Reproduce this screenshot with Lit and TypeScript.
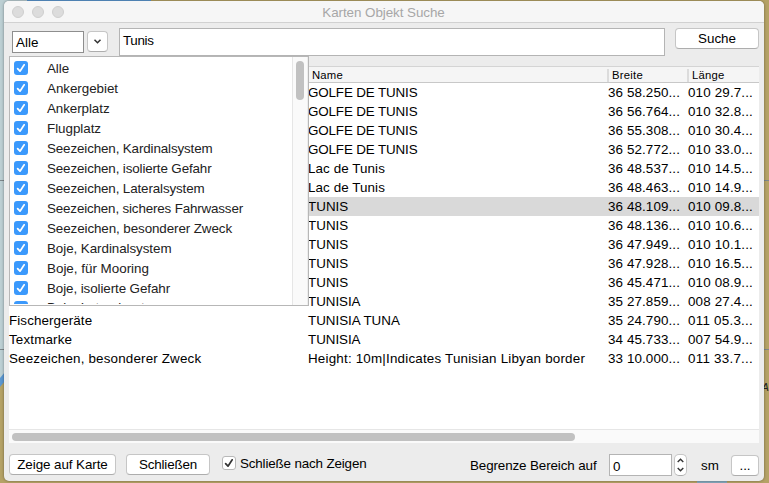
import { LitElement, html, css, svg } from "lit";
import { customElement, property } from "lit/decorators.js";

const FAMILY = '"Liberation Sans", Arial, sans-serif';
const pen = document.createElement("canvas").getContext("2d")!;

/** A single line of text whose tracking is tuned so that it fills a given width. */
@customElement("fit-text")
class FitText extends LitElement {
  @property() text = "";
  @property({ type: Number }) width = 0;
  @property({ type: Number }) size = 13;
  static styles = css`
    :host { display: inline-block; white-space: pre; }
  `;
  render() {
    pen.font = `${this.size}px ${FAMILY}`;
    const natural = pen.measureText(this.text).width;
    const track = this.width ? (this.width - natural) / this.text.length : 0;
    return html`<span style="font-size:${this.size}px;letter-spacing:${track.toFixed(3)}px">${this.text}</span>`;
  }
}

const fit = (text: string, width: number, size = 13.4) =>
  html`<fit-text .text=${text} .width=${width} .size=${size}></fit-text>`;

const FEATURES: [string, number][] = [
  ["Alle", 22],
  ["Ankergebiet", 71],
  ["Ankerplatz", 62.5],
  ["Flugplatz", 54],
  ["Seezeichen, Kardinalsystem", 165.5],
  ["Seezeichen, isolierte Gefahr", 164.5],
  ["Seezeichen, Lateralsystem", 157.5],
  ["Seezeichen, sicheres Fahrwasser", 196],
  ["Seezeichen, besonderer Zweck", 185],
  ["Boje, Kardinalsystem", 124.5],
  ["Boje, für Mooring", 102],
  ["Boje, isolierte Gefahr", 123],
  ["Boje, Lateralsystem", 116],
];

const RESULTS: [string, number, string, number, string, string][] = [
  ["", 0, "GOLFE DE TUNIS", 109.7, "36 58.250...", "010 29.7..."],
  ["", 0, "GOLFE DE TUNIS", 109.7, "36 56.764...", "010 32.8..."],
  ["", 0, "GOLFE DE TUNIS", 109.7, "36 55.308...", "010 30.4..."],
  ["", 0, "GOLFE DE TUNIS", 109.7, "36 52.772...", "010 33.0..."],
  ["", 0, "Lac de Tunis", 77.2, "36 48.537...", "010 14.5..."],
  ["", 0, "Lac de Tunis", 77.2, "36 48.463...", "010 14.9..."],
  ["", 0, "TUNIS", 40.3, "36 48.109...", "010 09.8..."],
  ["", 0, "TUNIS", 40.3, "36 48.136...", "010 10.6..."],
  ["", 0, "TUNIS", 40.3, "36 47.949...", "010 10.1..."],
  ["", 0, "TUNIS", 40.3, "36 47.928...", "010 16.5..."],
  ["", 0, "TUNIS", 40.3, "36 45.471...", "010 08.9..."],
  ["", 0, "TUNISIA", 52.5, "35 27.859...", "008 27.4..."],
  ["Fischergeräte", 83.2, "TUNISIA TUNA", 92.8, "35 24.790...", "011 05.3..."],
  ["Textmarke", 63.2, "TUNISIA", 52.5, "34 45.733...", "007 54.9..."],
  ["Seezeichen, besonderer Zweck", 192.3, "Height: 10m|Indicates Tunisian Libyan border", 277.3, "33 10.000...", "011 33.7..."],
];
const SELECTED = 6;

const tick = svg`<path d="M3.6 7.6 6 10.2 10.2 3.8" fill="none" stroke="currentColor" stroke-width="1.7" stroke-linecap="round" stroke-linejoin="round"/>`;

@customElement("app-root")
class AppRoot extends LitElement {
  static styles = css`
    :host {
      display: block; position: relative; width: 769px; height: 483px; overflow: hidden;
      font: 13px "Liberation Sans", Arial, sans-serif; color: #000; background: #b5a266;
    }
    * { box-sizing: border-box; }
    .map { position: absolute; inset: 0; display: block; }
    .window {
      position: relative; margin: 1px 5px 2px 4px; height: 480px; border-radius: 5px;
      background: #ececec; display: flex; flex-direction: column;
      box-shadow: 0 0 3px rgba(0,0,0,.4);
    }
    .title {
      height: 22px; flex: none; background: #f6f6f6; border-bottom: 1px solid #d1d1d1;
      border-radius: 5px 5px 0 0; display: grid; grid-template-columns: 1fr auto 1fr;
      align-items: center; padding: 0 9px 0 8px; color: #a7a7a7; line-height: 21px;
    }
    .title fit-text { padding-top: 1px; margin-bottom: -1px; }
    .lights { display: flex; gap: 8px; }
    .light { width: 12px; height: 12px; border-radius: 50%; background: #dcdcdc; border: 1px solid #cfcfcf; }
    .search { height: 43px; flex: none; display: flex; align-items: flex-start; padding: 5px 5px 0 8px; }
    .field { background: #fff; border: 1px solid #b4b4b4; }
    .kind { width: 72px; height: 22px; margin-top: 3px; border-color: #8e8e8e; padding-left: 3px; line-height: 21px; }
    .query { width: 546px; height: 28px; margin-left: 11px; padding-left: 3px; line-height: 23px; }
    .button {
      height: 21px; background: #fff; border: 1px solid #c6c6c6; border-bottom-color: #adadad;
      border-radius: 4px; display: flex; align-items: center; justify-content: center; line-height: 19px;
    }
    .drop { width: 21px; margin: 3px 0 0 3px; }
    .go { width: 84px; margin-left: 10px; }
    .table { margin: 0 5px 0 5px; height: 377px; flex: none; background: #fff; display: flex; flex-direction: column; }
    .row { display: grid; grid-template-columns: 299px 300px 80px 71px; height: 19px; line-height: 19px; flex: none; }
    .row.selected { background: #d9d9d9; }
    .head {
      height: 17px; line-height: 17px; background: #f5f5f5; border-top: 1px solid #d4d4d4;
      border-bottom: 1px solid #c8c8c8; font-size: 11px;
    }
    .head div { padding-left: 4px; display: flex; }
    .head .sep { border-left: 2px solid #dcdcdc; margin: 2px 0 2px -1px; line-height: 13px; padding-left: 3px; }
    .hbar { margin-top: auto; height: 14px; background: #fafafa; border-top: 1px solid #e6e6e6; padding: 3px; }
    .thumb { background: #c1c1c1; border-radius: 4px; }
    .hbar .thumb { width: 563px; height: 8px; }
    .actions { flex: 1; display: flex; align-items: flex-start; padding: 11px 5px 0 5px; line-height: 19px; }
    .show { width: 107px; }
    .close { width: 84px; margin-left: 10px; }
    .check { width: 14px; height: 14px; border-radius: 3px; display: block; }
    .after { display: flex; margin-left: 12px; width: 248px; }
    .after .check { background: #fff; border: 1px solid #b8b8b8; margin: 2px 4px 0 0; color: #333; }
    .limit { width: 139px; margin-top: 2px; }
    .range { width: 63px; height: 22px; padding-left: 3px; line-height: 23px; }
    .step { width: 13px; height: 22px; border-radius: 5px; margin-left: 2px; }
    .unit { margin: 2px 0 0 14px; width: 30px; }
    .more { width: 28px; margin-top: 1px; }
    .popup {
      position: absolute; left: 5px; top: 55px; width: 300px; height: 250px; background: #fff;
      border: 1px solid #b7b7b7; display: flex; overflow: hidden; color: #222;
    }
    .list { flex: 1; height: 247px; overflow: hidden; padding-top: 1px; }
    .item { height: 20px; line-height: 22px; display: flex; align-items: flex-start; padding-left: 4px; }
    .item:last-child { line-height: 19px; }
    .item .check { background: #3b99fc; color: #fff; margin: 3px 19px 0 0; }
    .vbar { width: 16px; background: #fafafa; border-left: 1px solid #e6e6e6; border-right: 1px solid #ededed; padding: 4px 3px; }
    .vbar .thumb { width: 8px; height: 39px; }
  `;

  render() {
    return html`
      <svg class="map" width="769" height="483">
        <rect width="769" height="483" fill="#b5a266"/>
        <path d="M0 0H27V5H5V372L0 382Z" fill="#bccfd3"/>
        <rect x="27" width="124" height="4" fill="#5b97d0"/>
        <path d="M0 378 5 372V381L0 387Z" fill="#5b97d0"/>
        <path d="M0 180.5H5M764 180.5H769M0 349.5H5M764 349.5H769" stroke="#7d868a"/>
        <rect x="697" y="480" width="30" height="3" fill="#86a9bd"/>
        <text x="753.5" y="391" font-size="11" font-style="italic" fill="#222">RA</text>
      </svg>
      <div class="window">
        <div class="title">
          <div class="lights"><i class="light"></i><i class="light"></i><i class="light"></i></div>
          ${fit("Karten Objekt Suche", 122.5)}
        </div>
        <div class="search">
          <div class="field kind">${fit("Alle", 22.5)}</div>
          <div class="button drop">
            <svg width="9" height="7"><path d="M1.5 1.7 4.5 4.7 7.5 1.7" fill="none" stroke="#333" stroke-width="1.5"/></svg>
          </div>
          <div class="field query">${fit("Tunis", 30.5)}</div>
          <div class="button go">${fit("Suche", 38)}</div>
        </div>
        <div class="table">
          <div class="row head">
            <div></div>
            <div>${fit("Name", 31, 11.3)}</div>
            <div class="sep">${fit("Breite", 31, 11.3)}</div>
            <div class="sep">${fit("Länge", 32.5, 11.3)}</div>
          </div>
          ${RESULTS.map(([kind, kw, name, nw, lat, lon], i) => html`
            <div class="row ${i === SELECTED ? "selected" : ""}">
              <div>${kind ? fit(kind, kw) : ""}</div>
              <div>${fit(name, nw)}</div>
              <div>${fit(lat, 72)}</div>
              <div>${fit(lon, 65)}</div>
            </div>`)}
          <div class="hbar"><div class="thumb"></div></div>
        </div>
        <div class="actions">
          <div class="button show">${fit("Zeige auf Karte", 90.5)}</div>
          <div class="button close">${fit("Schließen", 58)}</div>
          <div class="after">
            <svg class="check" viewBox="1 1 12 12">${tick}</svg>
            ${fit("Schließe nach Zeigen", 126.5)}
          </div>
          <div class="limit">${fit("Begrenze Bereich auf", 126.5)}</div>
          <div class="field range">${fit("0", 8)}</div>
          <div class="button step">
            <svg width="9" height="16"><path d="M1.7 5 4.5 2.2 7.3 5M1.7 11 4.5 13.8 7.3 11" fill="none" stroke="#333" stroke-width="1.4"/></svg>
          </div>
          <div class="unit">${fit("sm", 18)}</div>
          <div class="button more">${fit("...", 11)}</div>
        </div>
        <div class="popup">
          <div class="list">
            ${FEATURES.map(([name, w]) => html`
              <div class="item"><svg class="check" viewBox="0 0 14 14">${tick}</svg>${fit(name, w)}</div>`)}
          </div>
          <div class="vbar"><div class="thumb"></div></div>
        </div>
      </div>
    `;
  }
}
